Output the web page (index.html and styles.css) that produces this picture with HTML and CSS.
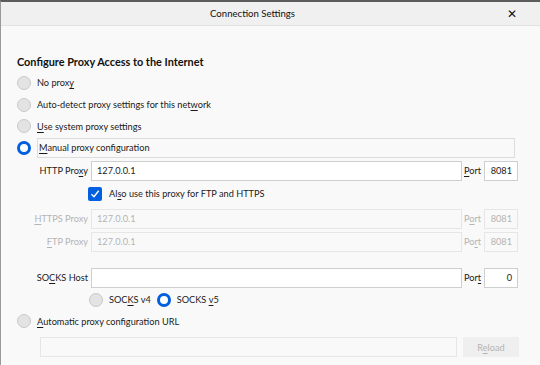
FILE: index.html
```html
<!DOCTYPE html>
<html lang="en">
<head>
    <meta charset="UTF-8">
    <title>Connection Settings</title>
    <link rel="stylesheet" href="styles.css">
</head>
<body>
<div class="window">
    <div class="titlebar">
        <span class="title">Connection Settings</span>
        <span class="close">&#x2715;</span>
    </div>

    <div class="content">
        <h2>Configure Proxy Access to the Internet</h2>

        <div class="radio-row"><span class="radio"></span>No prox<u>y</u></div>
        <div class="radio-row"><span class="radio"></span>Auto-detect proxy settings for this net<u>w</u>ork</div>
        <div class="radio-row"><span class="radio"></span><u>U</u>se system proxy settings</div>
        <div class="radio-row"><span class="radio checked"></span><span class="focus"><u>M</u>anual proxy configuration</span></div>

        <div class="field-row first">
            <label class="field-label">HTTP Pro<u>x</u>y</label>
            <div class="input">127.0.0.1</div>
            <label class="port-label"><u>P</u>ort</label>
            <div class="input port">8081</div>
        </div>

        <div class="check-row">
            <span class="checkbox">
                <svg width="10" height="10" viewBox="0 0 10 10"><path d="M1.5 5.2 L4 7.8 L8.7 1.8" fill="none" stroke="#fff" stroke-width="1.4"/></svg>
            </span>
            Al<u>s</u>o use this proxy for FTP and HTTPS
        </div>

        <div class="field-row disabled">
            <label class="field-label"><u>H</u>TTPS Proxy</label>
            <div class="input">127.0.0.1</div>
            <label class="port-label">P<u>o</u>rt</label>
            <div class="input port">8081</div>
        </div>

        <div class="field-row disabled ftp">
            <label class="field-label"><u>F</u>TP Proxy</label>
            <div class="input">127.0.0.1</div>
            <label class="port-label">Po<u>r</u>t</label>
            <div class="input port">8081</div>
        </div>

        <div class="field-row socks">
            <label class="field-label">SO<u>C</u>KS Host</label>
            <div class="input"></div>
            <label class="port-label">Por<u>t</u></label>
            <div class="input port">0</div>
        </div>

        <div class="socks-row">
            <div class="radio-row"><span class="radio"></span>SOC<u>K</u>S v4</div>
            <div class="radio-row"><span class="radio checked"></span>SOCKS&nbsp;<u>v</u>5</div>
        </div>

        <div class="radio-row"><span class="radio"></span><u>A</u>utomatic proxy configuration URL</div>

        <div class="url-row">
            <div class="input url"></div>
            <button class="reload" disabled>R<u>e</u>load</button>
        </div>
    </div>
</div>
</body>
</html>
```

FILE: styles.css
```css
* {
    box-sizing: border-box;
    margin: 0;
    padding: 0;
}

body {
    font-family: Lato, "Noto Sans", sans-serif;
    font-size: 9.2px;
    color: #1a1a1a;
    background-color: #f9f9f9;
}

u {
    text-decoration: underline;
    text-underline-offset: 2px;
}

.window {
    width: 540px;
    height: 365px;
    border-top: 2px solid #5c5c5c;
    border-left: 1px solid #9a9a9a;
    background-color: #f9f9f9;
}

.titlebar {
    position: relative;
    height: 24px;
    padding-right: 36px;
    background-color: #f0f0f0;
    border-bottom: 1px solid #e2e2e2;
    display: flex;
    align-items: center;
    justify-content: center;
}

.title {
    font-size: 9.6px;
    color: #111;
}

.close {
    position: absolute;
    right: 23px;
    top: 4px;
    font-size: 12px;
    color: #111;
}

.content {
    padding: 28px 0 0 16px;
}

h2 {
    font-size: 10.9px;
    font-weight: 700;
    color: #111;
    line-height: 16px;
    margin-bottom: 2px;
}

.radio-row {
    display: flex;
    align-items: center;
    height: 21.7px;
}

.radio {
    width: 14px;
    height: 14px;
    border-radius: 50%;
    background-color: #e3e3e3;
    border: 1px solid #c9c9c9;
    margin-right: 6px;
    flex-shrink: 0;
}

.radio.checked {
    background-color: #fff;
    border: 3.5px solid #0060df;
}

.focus {
    flex: 1;
    margin-right: 25px;
    border: 1px solid #dcdcdc;
    height: 20px;
    line-height: 18px;
    padding-left: 1px;
}

.field-row {
    display: flex;
    align-items: center;
    height: 20px;
    margin-top: 2px;
}

.field-row.ftp {
    margin-top: 3px;
}

.field-label {
    width: 71px;
    flex-shrink: 0;
    text-align: right;
    margin-right: 3px;
    white-space: nowrap;
}

.input {
    width: 371px;
    height: 20px;
    flex-shrink: 0;
    background-color: #fff;
    border: 1px solid #cfcfcf;
    padding-left: 5px;
    line-height: 18px;
}

.port-label {
    width: 22px;
    flex-shrink: 0;
    padding-left: 2px;
    white-space: nowrap;
}

.input.port {
    width: 34px;
    text-align: right;
    padding-right: 5px;
    padding-left: 0;
}

.disabled .field-label,
.disabled .port-label,
.disabled .input {
    color: #b4b4b4;
}

.disabled .input {
    background-color: #f9f9f9;
    border-color: #e6e6e6;
}

.field-row.socks {
    margin-top: 16px;
}

.check-row {
    display: flex;
    align-items: center;
    height: 26px;
    margin-left: 71px;
}

.checkbox {
    width: 14px;
    height: 14px;
    background-color: #0060df;
    border-radius: 2px;
    display: flex;
    align-items: center;
    justify-content: center;
    margin-right: 7px;
}

.socks-row {
    display: flex;
    margin-left: 72px;
    gap: 6px;
    margin-top: 1px;
}

.url-row {
    display: flex;
    align-items: center;
    margin-left: 23px;
    margin-top: 5px;
}

.input.url {
    width: 417px;
    background-color: #f9f9f9;
    border-color: #e6e6e6;
}

.reload {
    margin-left: 6px;
    width: 56px;
    height: 20px;
    border: none;
    background-color: #efefef;
    color: #b4b4b4;
    font-family: inherit;
    font-size: 9.2px;
}
```
